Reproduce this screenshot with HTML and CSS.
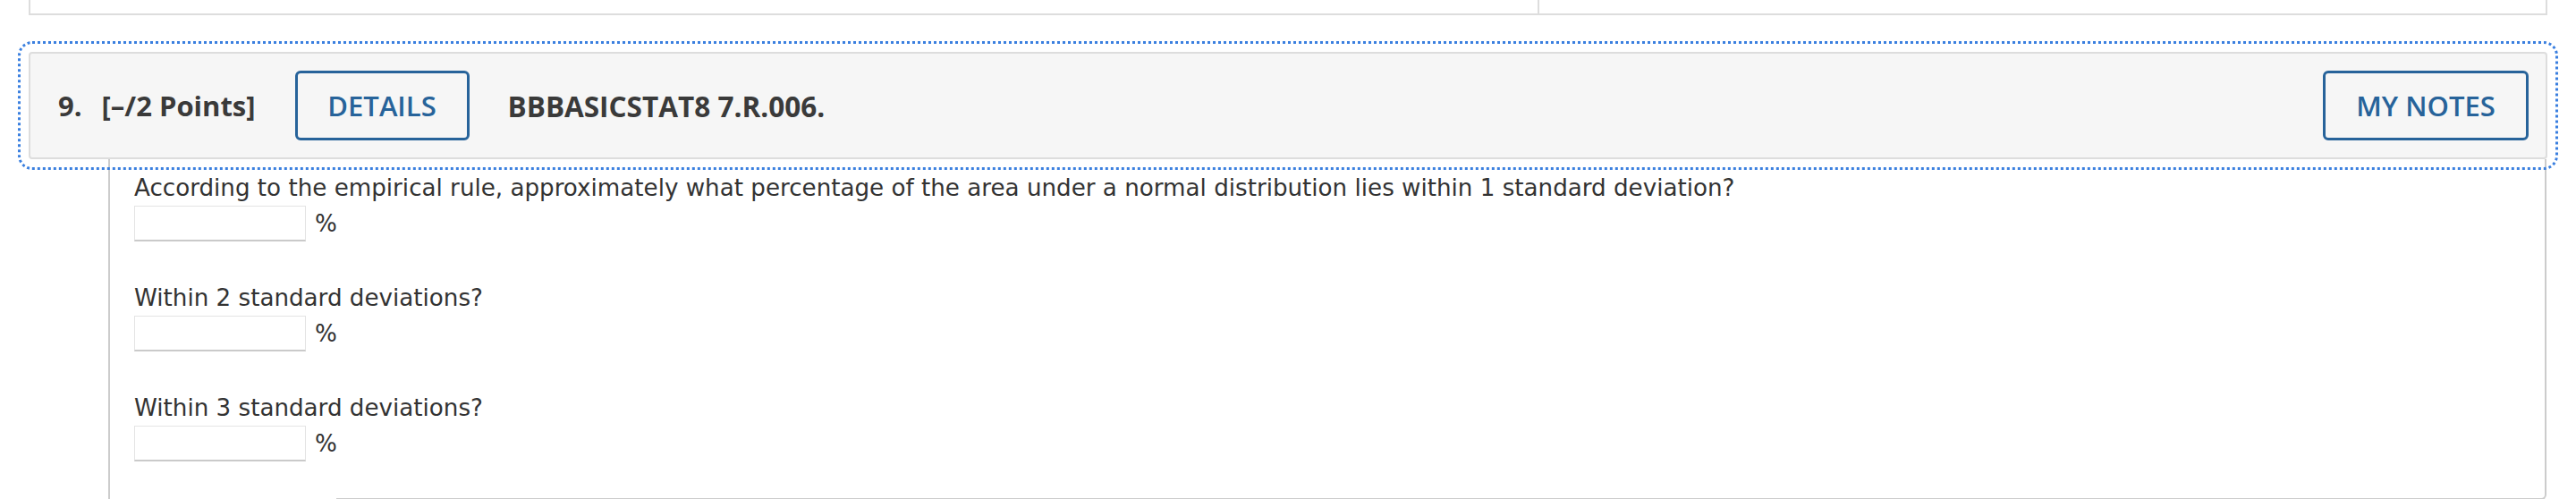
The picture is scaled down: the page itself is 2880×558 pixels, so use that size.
FILE: index.html
```html
<!DOCTYPE html>
<html lang="en">
<head>
<meta charset="utf-8">
<title>Question 9</title>
<link rel="stylesheet" href="styles.css">
</head>
<body>
<div class="page">
  <div class="prev-box">
    <div class="prev-left"></div>
    <div class="prev-right"></div>
  </div>

  <div class="q-header">
    <span class="q-num">9.</span>
    <span class="q-points">[–/2 Points]</span>
    <button class="btn btn-details" type="button">DETAILS</button>
    <span class="q-title">BBBASICSTAT8 7.R.006.</span>
    <span class="spacer"></span>
    <button class="btn btn-notes" type="button">MY NOTES</button>
  </div>

  <div class="q-body">
    <div class="q-panel">
      <div class="q-content">
        <div class="q-group">
          <p class="q-prompt">According to the empirical rule, approximately what percentage of the area under a normal distribution lies within 1 standard deviation?</p>
          <div class="q-answer"><span class="q-input"></span><span class="q-unit">%</span></div>
        </div>
        <div class="q-group">
          <p class="q-prompt">Within 2 standard deviations?</p>
          <div class="q-answer"><span class="q-input"></span><span class="q-unit">%</span></div>
        </div>
        <div class="q-group q-group-last">
          <p class="q-prompt">Within 3 standard deviations?</p>
          <div class="q-answer"><span class="q-input"></span><span class="q-unit">%</span></div>
        </div>
      </div>
    </div>
  </div>
</div>
</body>
</html>
```
FILE: styles.css
```css
html, body {
  margin: 0;
  padding: 0;
  background: #ffffff;
}

body {
  font-family: "DejaVu Sans", "Liberation Sans", sans-serif;
  color: #333333;
  overflow: hidden;
}

.page {
  margin: 0 32px;
}

/* previous question box (cut at top) */
.prev-box {
  display: grid;
  grid-template-columns: 1687px 1fr;
  height: 15px;
  border-left: 2px solid #dddddd;
  border-right: 2px solid #dddddd;
  border-bottom: 2px solid #dddddd;
}

.prev-left {
  border-right: 2px solid #dddddd;
}

/* question header */
.q-header {
  margin-top: 41px;
  height: 116px;
  display: flex;
  align-items: center;
  padding: 0 19px 0 31px;
  background: #f6f6f6;
  border: 2px solid #dddddd;
  border-radius: 4px;
  outline: 3px dotted #3a7fdf;
  outline-offset: 9px;
  font-family: "Open Sans", "Liberation Sans", sans-serif;
  font-size: 31px;
  font-weight: 700;
  color: #3a3a3a;
  white-space: nowrap;
}

.q-num {
  margin-right: 22px;
}

.q-points {
  margin-right: 44px;
}

.q-title {
  font-size: 31.5px;
}

.btn {
  box-sizing: border-box;
  height: 78px;
  padding: 0;
  background: transparent;
  border: 3px solid #27639a;
  border-radius: 6px;
  color: #27639a;
  font-family: "Open Sans", "Liberation Sans", sans-serif;
  font-size: 31px;
  font-weight: 600;
  line-height: 1;
  cursor: pointer;
}

.btn-details {
  width: 195px;
  margin-right: 43px;
}

.btn-notes {
  width: 230px;
}

.spacer {
  flex: 1;
}

/* question body */
.q-body {
  margin-left: 89px;
  margin-right: 1px;
  border-left: 2px solid #cccccc;
}

.q-panel {
  margin-left: 253px;
  padding-top: 16px;
  padding-bottom: 41px;
  border-right: 2px solid #cccccc;
  border-bottom: 2px solid #cccccc;
  border-bottom-right-radius: 6px;
}

.q-content {
  margin-left: -226px;
  font-size: 26.16px;
  line-height: 32px;
  color: #333333;
}

.q-group {
  margin-bottom: 47px;
}

.q-group-last {
  margin-bottom: 0;
}

.q-prompt {
  margin: 0 0 4px 0;
  white-space: nowrap;
}

.q-answer {
  display: flex;
  align-items: center;
  height: 40px;
}

.q-input {
  box-sizing: border-box;
  display: block;
  width: 192px;
  height: 40px;
  background: #ffffff;
  border: 1px solid #e4e4e4;
  border-bottom: 2px solid #cacaca;
}

.q-unit {
  margin-left: 10px;
}
```
